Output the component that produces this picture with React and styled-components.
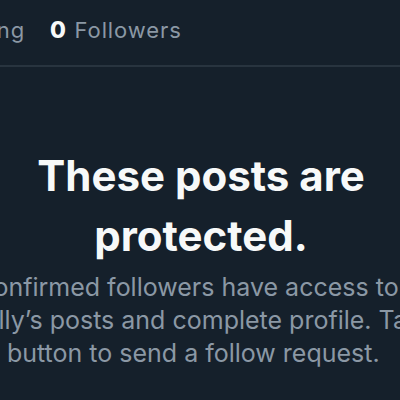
import React from 'react'
import styled, {createGlobalStyle} from 'styled-components'

const GlobalStyle = createGlobalStyle`
    html, body {
        margin: 0;
        padding: 0;
        background: #15202b;
        overflow: hidden;
    }
    body {
        width: 400px;
        height: 400px;
        font-family: Inter, "Noto Sans", sans-serif;
    }
`

const Page = styled.div`
    width: 400px;
    height: 400px;
    overflow: hidden;
    background: #15202b;
`

const StatsRow = styled.div`
    display: flex;
    gap: 25px;
    height: 65px;
    box-sizing: border-box;
    padding-top: 17px;
    margin-left: -106px;
    font-size: 22px;
    line-height: 26px;
    letter-spacing: 0.9px;
    white-space: nowrap;
`

const Stat = styled.span`
    color: #8b98a5;
`

const Count = styled.b`
    color: #f7f9f9;
    font-weight: 800;
    font-size: 23px;
    letter-spacing: 1.5px;
    margin-right: 7px;
`

const Divider = styled.div`
    height: 2px;
    background: #28343f;
`

const Column = styled.div`
    width: 600px;
    margin-left: -99px;
    padding-top: 79px;
`

const Title = styled.h1`
    margin: 0;
    text-align: center;
    color: #f7f9f9;
    font-size: 42px;
    line-height: 60px;
    font-weight: 700;
`

const Body = styled.div`
    margin-top: 5px;
    color: #8b98a5;
    font-size: 25px;
    line-height: 33px;
    white-space: nowrap;
`

const Line = styled.div`
    margin-left: ${p => p.indent}px;
`

export default function App() {
    return (
        <Page>
            <GlobalStyle />
            <StatsRow>
                <Stat><Count>0</Count>Following</Stat>
                <Stat><Count>0</Count>Followers</Stat>
            </StatsRow>
            <Divider />
            <Column>
                <Title>These posts are<br />protected.</Title>
                <Body>
                    <Line indent={17}>Only confirmed followers have access to</Line>
                    <Line indent={28}>@Shelly’s posts and complete profile. Tap the</Line>
                    <Line indent={1}>“Follow” button to send a follow request.</Line>
                </Body>
            </Column>
        </Page>
    )
}
